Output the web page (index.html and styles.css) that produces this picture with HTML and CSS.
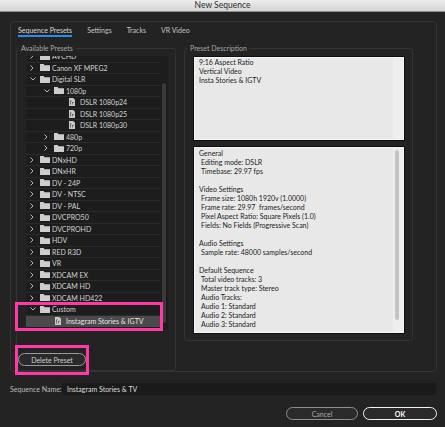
FILE: index.html
```html
<!DOCTYPE html>
<html>
<head>
<meta charset="utf-8">
<link rel="stylesheet" href="styles.css">
</head>
<body>
<div class="dialog">
  <div class="titlebar">New Sequence</div>
  <div class="content">
    <div class="panel">
      <div class="tabs">
        <span class="tab active">Sequence Presets</span>
        <span class="tab">Settings</span>
        <span class="tab">Tracks</span>
        <span class="tab">VR Video</span>
      </div>
      <div class="groups">
        <fieldset class="group group-left">
          <legend>Available Presets</legend>
          <div class="tree">
            <div class="tree-list">
              <div class="rows">
                <div class="row l0"><span class="chev"><svg width="4" height="6" viewBox="0 0 4 6"><polyline points="0.5,0.5 3,3 0.5,5.5"/></svg></span><span class="ico"><svg class="folder" width="10" height="7" viewBox="0 0 10 7"><path d="M0 0h3.6l1 1.2H10V7H0z"/></svg></span><span class="txt">AVCHD</span></div>
                <div class="row l0"><span class="chev"><svg width="4" height="6" viewBox="0 0 4 6"><polyline points="0.5,0.5 3,3 0.5,5.5"/></svg></span><span class="ico"><svg class="folder" width="10" height="7" viewBox="0 0 10 7"><path d="M0 0h3.6l1 1.2H10V7H0z"/></svg></span><span class="txt">Canon XF MPEG2</span></div>
                <div class="row l0"><span class="chev"><svg width="6" height="4" viewBox="0 0 6 4"><polyline points="0.5,0.5 3,3 5.5,0.5"/></svg></span><span class="ico"><svg class="folder" width="10" height="7" viewBox="0 0 10 7"><path d="M0 0h3.6l1 1.2H10V7H0z"/></svg></span><span class="txt">Digital SLR</span></div>
                <div class="row l1"><span class="chev"><svg width="6" height="4" viewBox="0 0 6 4"><polyline points="0.5,0.5 3,3 5.5,0.5"/></svg></span><span class="ico"><svg class="folder" width="10" height="7" viewBox="0 0 10 7"><path d="M0 0h3.6l1 1.2H10V7H0z"/></svg></span><span class="txt">1080p</span></div>
                <div class="row l2"><span class="chev"></span><span class="ico"><svg class="file" width="6" height="8" viewBox="0 0 6 8"><path class="page" d="M0 0h4.2L6 1.8V8H0z"/><path class="mark" d="M1 2.5h1.6v0.8H1.8v3.2H1zM3 4h1.8v0.7H3.7v1.8H3z"/></svg></span><span class="txt">DSLR 1080p24</span></div>
                <div class="row l2"><span class="chev"></span><span class="ico"><svg class="file" width="6" height="8" viewBox="0 0 6 8"><path class="page" d="M0 0h4.2L6 1.8V8H0z"/><path class="mark" d="M1 2.5h1.6v0.8H1.8v3.2H1zM3 4h1.8v0.7H3.7v1.8H3z"/></svg></span><span class="txt">DSLR 1080p25</span></div>
                <div class="row l2"><span class="chev"></span><span class="ico"><svg class="file" width="6" height="8" viewBox="0 0 6 8"><path class="page" d="M0 0h4.2L6 1.8V8H0z"/><path class="mark" d="M1 2.5h1.6v0.8H1.8v3.2H1zM3 4h1.8v0.7H3.7v1.8H3z"/></svg></span><span class="txt">DSLR 1080p30</span></div>
                <div class="row l1"><span class="chev"><svg width="4" height="6" viewBox="0 0 4 6"><polyline points="0.5,0.5 3,3 0.5,5.5"/></svg></span><span class="ico"><svg class="folder" width="10" height="7" viewBox="0 0 10 7"><path d="M0 0h3.6l1 1.2H10V7H0z"/></svg></span><span class="txt">480p</span></div>
                <div class="row l1"><span class="chev"><svg width="4" height="6" viewBox="0 0 4 6"><polyline points="0.5,0.5 3,3 0.5,5.5"/></svg></span><span class="ico"><svg class="folder" width="10" height="7" viewBox="0 0 10 7"><path d="M0 0h3.6l1 1.2H10V7H0z"/></svg></span><span class="txt">720p</span></div>
                <div class="row l0"><span class="chev"><svg width="4" height="6" viewBox="0 0 4 6"><polyline points="0.5,0.5 3,3 0.5,5.5"/></svg></span><span class="ico"><svg class="folder" width="10" height="7" viewBox="0 0 10 7"><path d="M0 0h3.6l1 1.2H10V7H0z"/></svg></span><span class="txt">DNxHD</span></div>
                <div class="row l0"><span class="chev"><svg width="4" height="6" viewBox="0 0 4 6"><polyline points="0.5,0.5 3,3 0.5,5.5"/></svg></span><span class="ico"><svg class="folder" width="10" height="7" viewBox="0 0 10 7"><path d="M0 0h3.6l1 1.2H10V7H0z"/></svg></span><span class="txt">DNxHR</span></div>
                <div class="row l0"><span class="chev"><svg width="4" height="6" viewBox="0 0 4 6"><polyline points="0.5,0.5 3,3 0.5,5.5"/></svg></span><span class="ico"><svg class="folder" width="10" height="7" viewBox="0 0 10 7"><path d="M0 0h3.6l1 1.2H10V7H0z"/></svg></span><span class="txt">DV - 24P</span></div>
                <div class="row l0"><span class="chev"><svg width="4" height="6" viewBox="0 0 4 6"><polyline points="0.5,0.5 3,3 0.5,5.5"/></svg></span><span class="ico"><svg class="folder" width="10" height="7" viewBox="0 0 10 7"><path d="M0 0h3.6l1 1.2H10V7H0z"/></svg></span><span class="txt">DV - NTSC</span></div>
                <div class="row l0"><span class="chev"><svg width="4" height="6" viewBox="0 0 4 6"><polyline points="0.5,0.5 3,3 0.5,5.5"/></svg></span><span class="ico"><svg class="folder" width="10" height="7" viewBox="0 0 10 7"><path d="M0 0h3.6l1 1.2H10V7H0z"/></svg></span><span class="txt">DV - PAL</span></div>
                <div class="row l0"><span class="chev"><svg width="4" height="6" viewBox="0 0 4 6"><polyline points="0.5,0.5 3,3 0.5,5.5"/></svg></span><span class="ico"><svg class="folder" width="10" height="7" viewBox="0 0 10 7"><path d="M0 0h3.6l1 1.2H10V7H0z"/></svg></span><span class="txt">DVCPRO50</span></div>
                <div class="row l0"><span class="chev"><svg width="4" height="6" viewBox="0 0 4 6"><polyline points="0.5,0.5 3,3 0.5,5.5"/></svg></span><span class="ico"><svg class="folder" width="10" height="7" viewBox="0 0 10 7"><path d="M0 0h3.6l1 1.2H10V7H0z"/></svg></span><span class="txt">DVCPROHD</span></div>
                <div class="row l0"><span class="chev"><svg width="4" height="6" viewBox="0 0 4 6"><polyline points="0.5,0.5 3,3 0.5,5.5"/></svg></span><span class="ico"><svg class="folder" width="10" height="7" viewBox="0 0 10 7"><path d="M0 0h3.6l1 1.2H10V7H0z"/></svg></span><span class="txt">HDV</span></div>
                <div class="row l0"><span class="chev"><svg width="4" height="6" viewBox="0 0 4 6"><polyline points="0.5,0.5 3,3 0.5,5.5"/></svg></span><span class="ico"><svg class="folder" width="10" height="7" viewBox="0 0 10 7"><path d="M0 0h3.6l1 1.2H10V7H0z"/></svg></span><span class="txt">RED R3D</span></div>
                <div class="row l0"><span class="chev"><svg width="4" height="6" viewBox="0 0 4 6"><polyline points="0.5,0.5 3,3 0.5,5.5"/></svg></span><span class="ico"><svg class="folder" width="10" height="7" viewBox="0 0 10 7"><path d="M0 0h3.6l1 1.2H10V7H0z"/></svg></span><span class="txt">VR</span></div>
                <div class="row l0"><span class="chev"><svg width="4" height="6" viewBox="0 0 4 6"><polyline points="0.5,0.5 3,3 0.5,5.5"/></svg></span><span class="ico"><svg class="folder" width="10" height="7" viewBox="0 0 10 7"><path d="M0 0h3.6l1 1.2H10V7H0z"/></svg></span><span class="txt">XDCAM EX</span></div>
                <div class="row l0"><span class="chev"><svg width="4" height="6" viewBox="0 0 4 6"><polyline points="0.5,0.5 3,3 0.5,5.5"/></svg></span><span class="ico"><svg class="folder" width="10" height="7" viewBox="0 0 10 7"><path d="M0 0h3.6l1 1.2H10V7H0z"/></svg></span><span class="txt">XDCAM HD</span></div>
                <div class="row l0"><span class="chev"><svg width="4" height="6" viewBox="0 0 4 6"><polyline points="0.5,0.5 3,3 0.5,5.5"/></svg></span><span class="ico"><svg class="folder" width="10" height="7" viewBox="0 0 10 7"><path d="M0 0h3.6l1 1.2H10V7H0z"/></svg></span><span class="txt">XDCAM HD422</span></div>
                <div class="row l0"><span class="chev"><svg width="6" height="4" viewBox="0 0 6 4"><polyline points="0.5,0.5 3,3 5.5,0.5"/></svg></span><span class="ico"><svg class="folder" width="10" height="7" viewBox="0 0 10 7"><path d="M0 0h3.6l1 1.2H10V7H0z"/></svg></span><span class="txt">Custom</span></div>
                <div class="row l1 selected"><span class="chev"></span><span class="ico"><svg class="file" width="6" height="8" viewBox="0 0 6 8"><path class="page" d="M0 0h4.2L6 1.8V8H0z"/><path class="mark" d="M1 2.5h1.6v0.8H1.8v3.2H1zM3 4h1.8v0.7H3.7v1.8H3z"/></svg></span><span class="txt">Instagram Stories &amp; IGTV</span></div>
              </div>
            </div>
            <div class="tree-scroll"><div class="thumb"></div></div>
          </div>
          <button class="btn btn-delete">Delete Preset</button>
        </fieldset>
        <fieldset class="group group-right">
          <legend>Preset Description</legend>
          <div class="desc desc-top">
            <div class="desc-text">
              <div>9:16 Aspect Ratio</div>
              <div>Vertical Video</div>
              <div>Insta Stories &amp; IGTV</div>
            </div>
            <div class="desc-track"></div>
          </div>
          <div class="desc desc-bottom">
            <div class="desc-text">
              <div>General</div>
              <div class="ind">Editing mode: DSLR</div>
              <div class="ind">Timebase: 29.97 fps</div>
              <div>&nbsp;</div>
              <div>Video Settings</div>
              <div class="ind">Frame size: 1080h 1920v (1.0000)</div>
              <div class="ind">Frame rate: 29.97&nbsp; frames/second</div>
              <div class="ind">Pixel Aspect Ratio: Square Pixels (1.0)</div>
              <div class="ind">Fields: No Fields (Progressive Scan)</div>
              <div>&nbsp;</div>
              <div>Audio Settings</div>
              <div class="ind">Sample rate: 48000 samples/second</div>
              <div>&nbsp;</div>
              <div>Default Sequence</div>
              <div class="ind">Total video tracks: 3</div>
              <div class="ind">Master track type: Stereo</div>
              <div class="ind">Audio Tracks:</div>
              <div class="ind">Audio 1: Standard</div>
              <div class="ind">Audio 2: Standard</div>
              <div class="ind">Audio 3: Standard</div>
            </div>
            <div class="desc-track"><div class="desc-thumb"></div></div>
          </div>
        </fieldset>
      </div>
    </div>
    <div class="name-row">
      <span class="name-label">Sequence Name:</span>
      <div class="name-input">Instagram Stories &amp; TV</div>
    </div>
    <div class="actions">
      <button class="btn btn-cancel">Cancel</button>
      <button class="btn btn-ok">OK</button>
    </div>
  </div>
  <div class="mark-box mark-tree"></div>
  <div class="mark-box mark-delete"></div>
</div>
</body>
</html>
```
FILE: styles.css
```css
* { box-sizing: border-box; }
html, body { margin: 0; padding: 0; background: #232323; }
body { font-family: Lato, "Open Sans", sans-serif; font-size: 7px; color: #c8c8c8; }

.dialog { position: relative; width: 445px; height: 427px; background: #232323; overflow: hidden; }

.titlebar {
  height: 12px; line-height: 11px; text-align: center;
  font-size: 8.5px; color: #2a2a2a;
  background: linear-gradient(#eeeeee, #d4d4d4);
  border-bottom: 1px solid #8c8c8c;
}

.content { padding: 9px 8px 0 10px; }

.panel {
  border: 1px solid #343434; border-radius: 4px;
  padding: 3px 5px 0 5px;
}

.tabs { display: flex; gap: 15px; margin-left: 2px; height: 12px; }
.tab { line-height: 10px; color: #c4c4c4; height: 12px; }
.tab.active { border-bottom: 2px solid #2d8ceb; color: #d8d8d8; }

.groups { display: flex; gap: 8px; margin-top: 6px; align-items: flex-start; }

.group {
  margin: 0; padding: 0; min-width: 0;
  border: 1px solid #333333; border-radius: 3px;
}
.group legend {
  padding: 0 2px; line-height: 10px; font-size: 7px; color: #a8a8a8;
}
.group-left { width: 160px; padding-bottom: 4px; }
.group-left legend { margin-left: 2px; }
.group-right { width: 229px; padding: 0 8px 7px 9px; }
.group-right legend { margin-left: -6px; }

.tree {
  display: flex; height: 274px; margin: 3px 7px 0 9px;
  background: #1d1d1d; overflow: hidden;
}
.tree-list { flex: 1; overflow: hidden; }
.rows { margin-top: -5px; }
.row {
  display: flex; align-items: center; height: 11.5px;
  border-bottom: 1px solid #2a2a2a; color: #d2d2d2; white-space: nowrap;
}
.row.l0 { padding-left: 4px; }
.row.l1 { padding-left: 18px; }
.row.l2 { padding-left: 32px; }
.row.selected { background: #4a4a4a; border-bottom-color: #4a4a4a; color: #e6e6e6; }
.chev { width: 10px; display: flex; align-items: center; }
.chev svg polyline { fill: none; stroke: #b8b8b8; stroke-width: 1; }
.ico { width: 12px; display: flex; align-items: center; }
.folder path { fill: #cdcdcd; }
.file { margin-left: 1px; }
.file .page { fill: #c8c8c8; }
.file .mark { fill: #5a5a5a; }
.txt { line-height: 10px; }

.tree-scroll { width: 7px; padding: 27px 2px 0 1px; }
.thumb { width: 4px; height: 240px; background: #3a3a3a; border-radius: 2px; }

.btn {
  font-family: Lato, "Open Sans", sans-serif; font-size: 7px;
  height: 13px; padding: 0; border-radius: 7px; background: #2a2a2a;
  line-height: 10px; cursor: default;
}
.btn-delete {
  display: block; width: 68px; margin: 23px 0 0 1px;
  border: 1px solid #9a9a9a; color: #cfcfcf;
}

.desc {
  display: flex; background: #e8e8e8;
  border: 1px solid #f4f4f4; box-shadow: 0 0 0 1px #0e0e0e;
  color: #1c1c1c; line-height: 9px;
}
.desc-top { height: 83px; margin-top: 4px; }
.desc-bottom { height: 186px; margin-top: 7px; }
.desc-text { flex: 1; padding-left: 4px; white-space: nowrap; overflow: hidden; }
.desc-bottom .desc-text { padding-top: 0.5px; }
.desc-text .ind { padding-left: 2px; }
.desc-track { width: 10px; background: #eeeeee; padding: 2px 3px 0 2px; }
.desc-thumb { width: 4px; height: 170px; background: #c4c4c4; border-radius: 2px; }

.name-row { display: flex; align-items: center; margin-top: 11px; height: 12px; }
.name-label { width: 52px; color: #bdbdbd; line-height: 12px; }
.name-input {
  flex: 1; height: 12px; margin-right: 1px; background: #1a1a1a;
  color: #dcdcdc; line-height: 12px; padding-left: 5px;
}

.actions { display: flex; justify-content: flex-end; gap: 5px; margin-top: 12px; }
.btn-cancel { width: 72px; border: 1px solid #8e8e8e; color: #a8a8a8; }
.btn-ok { width: 74px; border: 1.5px solid #f2f2f2; color: #ffffff; font-weight: bold; }

.mark-box { position: absolute; border: 3px solid #ff3aa6; }
.mark-tree { left: 15px; top: 302px; width: 148px; height: 29px; }
.mark-delete { left: 15px; top: 345px; width: 74px; height: 30px; }
```
